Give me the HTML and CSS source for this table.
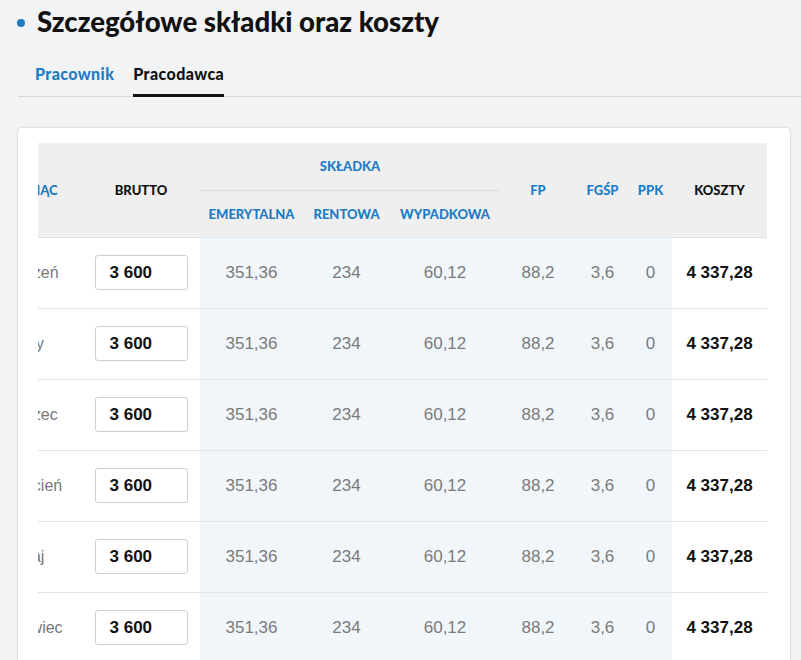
FILE: index.html
```html
<!DOCTYPE html>
<html lang="pl">
<head>
<meta charset="utf-8">
<title>Szczegółowe składki oraz koszty</title>
<link rel="stylesheet" href="styles.css">
</head>
<body>
<div class="page">
  <h1 class="title"><span class="dot"></span>Szczegółowe składki oraz koszty</h1>
  <div class="tabs">
    <span class="tab">Pracownik</span>
    <span class="tab active">Pracodawca</span>
  </div>
  <div class="card">
    <div class="scroller">
      <table class="grid">
        <colgroup>
          <col class="c-month"><col class="c-brutto"><col class="c-emer"><col class="c-rent"><col class="c-wyp"><col class="c-fp"><col class="c-fgsp"><col class="c-ppk"><col class="c-koszt">
        </colgroup>
        <thead>
          <tr class="h1">
            <th rowspan="2" class="blue">MIESIĄC</th>
            <th rowspan="2">BRUTTO</th>
            <th colspan="3" class="blue group">SKŁADKA</th>
            <th rowspan="2" class="blue">FP</th>
            <th rowspan="2" class="blue">FGŚP</th>
            <th rowspan="2" class="blue">PPK</th>
            <th rowspan="2">KOSZTY</th>
          </tr>
          <tr class="h2">
            <th class="blue">EMERYTALNA</th>
            <th class="blue">RENTOWA</th>
            <th class="blue">WYPADKOWA</th>
          </tr>
        </thead>
        <tbody>
          <tr><td class="month">styczeń</td><td><span class="inp">3 600</span></td><td class="band">351,36</td><td class="band">234</td><td class="band">60,12</td><td class="band">88,2</td><td class="band">3,6</td><td class="band">0</td><td class="total">4 337,28</td></tr>
          <tr><td class="month">luty</td><td><span class="inp">3 600</span></td><td class="band">351,36</td><td class="band">234</td><td class="band">60,12</td><td class="band">88,2</td><td class="band">3,6</td><td class="band">0</td><td class="total">4 337,28</td></tr>
          <tr><td class="month">marzec</td><td><span class="inp">3 600</span></td><td class="band">351,36</td><td class="band">234</td><td class="band">60,12</td><td class="band">88,2</td><td class="band">3,6</td><td class="band">0</td><td class="total">4 337,28</td></tr>
          <tr><td class="month">kwiecień</td><td><span class="inp">3 600</span></td><td class="band">351,36</td><td class="band">234</td><td class="band">60,12</td><td class="band">88,2</td><td class="band">3,6</td><td class="band">0</td><td class="total">4 337,28</td></tr>
          <tr><td class="month">maj</td><td><span class="inp">3 600</span></td><td class="band">351,36</td><td class="band">234</td><td class="band">60,12</td><td class="band">88,2</td><td class="band">3,6</td><td class="band">0</td><td class="total">4 337,28</td></tr>
          <tr><td class="month">czerwiec</td><td><span class="inp">3 600</span></td><td class="band">351,36</td><td class="band">234</td><td class="band">60,12</td><td class="band">88,2</td><td class="band">3,6</td><td class="band">0</td><td class="total">4 337,28</td></tr>
          <tr><td class="month">lipiec</td><td><span class="inp">3 600</span></td><td class="band">351,36</td><td class="band">234</td><td class="band">60,12</td><td class="band">88,2</td><td class="band">3,6</td><td class="band">0</td><td class="total">4 337,28</td></tr>
        </tbody>
      </table>
    </div>
  </div>
</div>
</body>
</html>
```

FILE: styles.css
```css
html, body {
  margin: 0;
  padding: 0;
  overflow: hidden;
  background: #f2f3f4;
}
.page {
  padding-left: 18px;
  font-family: "Liberation Sans", Arial, sans-serif;
}
.title {
  margin: 0;
  padding-top: 3px;
  height: 36px;
  display: flex;
  align-items: center;
  font-family: Lato, "Liberation Sans", sans-serif;
  font-weight: 900;
  font-size: 27.6px;
  color: #111;
  letter-spacing: 0;
}
.dot {
  width: 8px;
  height: 8px;
  border-radius: 50%;
  background: #1f7cc4;
  margin-left: -1px;
  margin-right: 12px;
  margin-top: 4px;
}
.tabs {
  margin-top: 20px;
  display: flex;
  gap: 19px;
  padding-left: 17px;
  border-bottom: 1px solid #d6d7d9;
}
.tab {
  font-family: Lato, "Liberation Sans", sans-serif;
  font-weight: 900;
  font-size: 16px;
  letter-spacing: 0.4px;
  color: #1f7cc4;
  padding: 5px 0 11px;
  border-bottom: 3px solid transparent;
  margin-bottom: -1px;
}
.tab.active {
  color: #111;
  border-bottom-color: #111;
}
.card {
  margin-top: 31px;
  width: 772px;
  box-sizing: border-box;
  background: #fff;
  border-radius: 3px;
  box-shadow: 0 0 2px rgba(0, 0, 0, 0.25);
  padding: 15px 23px 20px 20px;
}
.scroller {
  overflow: hidden;
}
.grid {
  margin-left: -57px;
  border-collapse: collapse;
  table-layout: fixed;
  width: 786px;
}
.c-month { width: 101px; }
.c-brutto { width: 118px; }
.c-emer { width: 103px; }
.c-rent { width: 87px; }
.c-wyp { width: 110px; }
.c-fp { width: 76px; }
.c-fgsp { width: 53px; }
.c-ppk { width: 43px; }
.c-koszt { width: 95px; }
thead th {
  background: #efefef;
  font-family: Lato, "Liberation Sans", sans-serif;
  font-weight: 900;
  font-size: 13px;
  color: #111;
  text-align: center;
  padding: 0;
  white-space: nowrap;
}
thead th.blue { color: #1f7cc4; }
.h1 { height: 47px; }
.h2 { height: 47px; }
.h2 th { border-top: 1px solid #dcdcdc; }
tbody td {
  height: 70px;
  padding: 0;
  border-top: 1px solid #e3e3e3;
  text-align: center;
  font-size: 17px;
  color: #7b7b7b;
  white-space: nowrap;
}
tbody td.band {
  background: #f1f6fb;
  border-top-color: #e0e6ee;
}
tbody td.month { color: #777; font-size: 16px; }
tbody td.total {
  font-weight: 700;
  color: #111;
}
.inp {
  display: inline-block;
  box-sizing: border-box;
  width: 93px;
  height: 35px;
  line-height: 33px;
  border: 1px solid #cfcfcf;
  border-radius: 3px;
  background: #fff;
  text-align: left;
  padding-left: 14px;
  font-weight: 700;
  color: #111;
  vertical-align: middle;
}
```
